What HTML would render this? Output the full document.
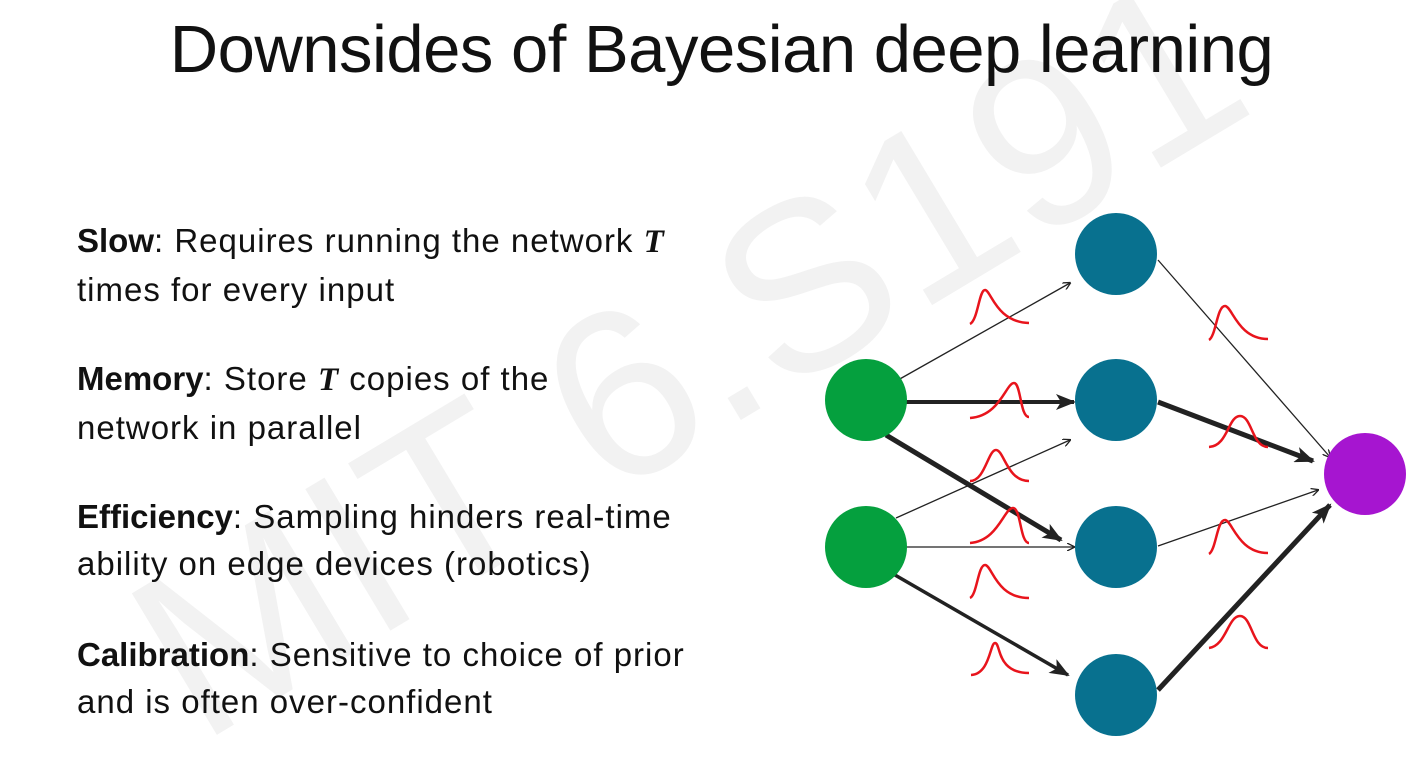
<!DOCTYPE html>
<html><head><meta charset="utf-8"><style>
html,body{margin:0;padding:0;background:#fff;}
body{width:1417px;height:758px;position:relative;overflow:hidden;font-family:"Liberation Sans",sans-serif;color:#111;}
.title{position:absolute;left:0;width:1417px;top:11px;text-align:center;font-size:67px;letter-spacing:-0.5px;transform:translateX(13px);}
.p{position:absolute;left:77px;font-size:33px;line-height:47px;letter-spacing:1px;}
.p b{font-weight:bold;letter-spacing:0;}
.T{font-family:"Liberation Serif",serif;font-style:italic;font-weight:bold;}
svg{position:absolute;left:0;top:0;overflow:hidden;}
</style></head><body>
<svg width="1417" height="758" viewBox="0 0 1417 758">
<text x="0" y="0" transform="translate(200,745) rotate(-31)" font-family="Liberation Sans" font-size="240" fill="#f2f2f2">MIT 6.S191</text>
</svg>
<div class="title">Downsides of Bayesian deep learning</div>
<div class="p" style="top:217px"><b>Slow</b>: Requires running the network <span class="T">T</span><br>times for every input</div>
<div class="p" style="top:355px"><b>Memory</b>: Store <span class="T">T</span> copies of the<br>network in parallel</div>
<div class="p" style="top:493px"><b>Efficiency</b>: Sampling hinders real-time<br>ability on edge devices (robotics)</div>
<div class="p" style="top:631px"><b>Calibration</b>: Sensitive to choice of prior<br>and is often over-confident</div>
<svg width="1417" height="758">
<defs>
<marker id="a1" markerWidth="8" markerHeight="8" refX="7" refY="4" orient="auto" markerUnits="userSpaceOnUse"><path d="M0,0 L8,4 L0,8" fill="none" stroke="#222" stroke-width="1.3"/></marker>
<marker id="a3" markerWidth="20" markerHeight="16" refX="18" refY="8" orient="auto" markerUnits="userSpaceOnUse"><path d="M0,0 L20,8 L0,16 L5,8z" fill="#222"/></marker>
</defs>
<g stroke="#222" fill="none">
<line x1="898" y1="380" x2="1070" y2="283" stroke-width="1.3" marker-end="url(#a1)"/>
<line x1="906" y1="402" x2="1074" y2="402" stroke-width="4" marker-end="url(#a3)"/>
<line x1="896" y1="518" x2="1070" y2="440" stroke-width="1.3" marker-end="url(#a1)"/>
<line x1="886" y1="435" x2="1061" y2="540" stroke-width="5" marker-end="url(#a3)"/>
<line x1="906" y1="547" x2="1074" y2="547" stroke-width="1.3" marker-end="url(#a1)"/>
<line x1="895" y1="575" x2="1068" y2="675" stroke-width="3.5" marker-end="url(#a3)"/>
<line x1="1158" y1="260" x2="1330" y2="457" stroke-width="1.3" marker-end="url(#a1)"/>
<line x1="1158" y1="402" x2="1313" y2="461" stroke-width="5" marker-end="url(#a3)"/>
<line x1="1158" y1="546" x2="1318" y2="490" stroke-width="1.3" marker-end="url(#a1)"/>
<line x1="1158" y1="690" x2="1330" y2="505" stroke-width="5" marker-end="url(#a3)"/>
</g>
<circle cx="866" cy="400" r="41" fill="#05a03e"/>
<circle cx="866" cy="547" r="41" fill="#05a03e"/>
<circle cx="1116" cy="254" r="41" fill="#08718f"/>
<circle cx="1116" cy="400" r="41" fill="#08718f"/>
<circle cx="1116" cy="547" r="41" fill="#08718f"/>
<circle cx="1116" cy="695" r="41" fill="#08718f"/>
<circle cx="1365" cy="474" r="41" fill="#a615d0"/>
<g stroke="#e8141c" stroke-width="2.5" fill="none">
<path d="M970,324 C978,320 979,290 985,290 C991,290 996,322 1029,323"/>
<path d="M970,418 C1000,416 1006,383 1014,383 C1021,383 1020,417 1029,417"/>
<path d="M970,481 C985,481 988,450 996,450 C1004,450 1007,481 1029,481"/>
<path d="M970,543 C998,541 1004,508 1013,508 C1021,508 1020,543 1029,543"/>
<path d="M970,598 C977,595 978,565 985,565 C992,565 996,598 1029,598"/>
<path d="M971,675 C990,674 990,643 995,643 C1001,643 996,673 1029,673"/>
<path d="M1209,340 C1216,336 1217,306 1225,306 C1232,306 1238,339 1268,339"/>
<path d="M1209,447 C1228,446 1228,416 1240,416 C1252,416 1252,447 1268,447"/>
<path d="M1209,554 C1216,550 1217,520 1225,520 C1232,520 1238,553 1268,553"/>
<path d="M1209,648 C1226,646 1228,616 1240,616 C1252,616 1252,648 1268,648"/>
</g>
</svg>
</body></html>
